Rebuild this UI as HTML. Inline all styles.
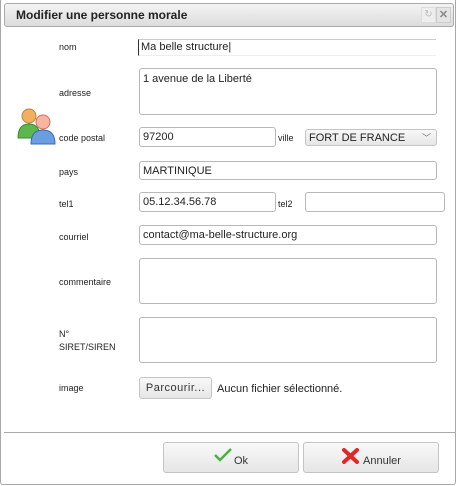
<!DOCTYPE html><html><head><style>
body{margin:0;width:456px;height:486px;background:#fff;font-family:"Liberation Sans",sans-serif;position:relative;overflow:hidden}
.a{position:absolute}
.win{left:0;top:0;width:454px;height:484px;border:1px solid #a8a8a8;border-top:none;border-radius:0 0 3px 3px}
.tb{left:4px;top:3px;width:448px;height:22px;border:1px solid #aaa;border-radius:3px;background:linear-gradient(#f4f4f4,#dcdcdc);font-weight:bold;font-size:12px;color:#222;line-height:22px;text-indent:11px}
.l{left:59px;font-size:9px;color:#222}
.i{border:1px solid #b8b8b8;border-radius:3px;background:#fff;font-size:11px;color:#222;box-sizing:border-box;padding:0 3px;display:flex;align-items:center}
.t{align-items:flex-start;padding-top:4px}
.btn{border:1px solid #c4c4c4;border-radius:3px;background:linear-gradient(#f8f8f8,#e6e6e6);font-size:11px;color:#333;text-align:center;box-sizing:border-box}
</style></head><body>
<div class="a win"></div>
<div class="a tb">Modifier une personne morale</div>
<div class="a" style="left:421px;top:7px;width:13px;height:14px;border:1px solid #ddd;background:#eee;font-size:10px;color:#bbb;text-align:center;line-height:14px">↻</div>
<div class="a" style="left:436px;top:7px;width:13px;height:14px;border:1px solid #ccc;background:#e4e4e4;font-size:11px;color:#888;text-align:center;line-height:14px;font-weight:bold">✕</div>
<div class="a l" style="top:42px">nom</div>
<div class="a" style="left:138px;top:39px;width:295px;height:15px;border-top:1px solid #ccc;border-bottom:1px solid #eee;border-left:1px solid #333;font-size:11px;color:#222;line-height:15px;padding-left:2px">Ma belle structure|</div>
<div class="a l" style="top:88px">adresse</div>
<div class="a i t" style="left:139px;top:68px;width:298px;height:47px">1 avenue de la Liberté</div>
<svg class="a" style="left:16px;top:106px" width="40" height="40" viewBox="0 0 40 40">
<circle cx="13" cy="10" r="7" fill="#f0b060" stroke="#c08040"/>
<path d="M2 32 Q2 18 13 18 Q24 18 24 32 Z" fill="#5cb84c" stroke="#3a8a30"/>
<circle cx="27" cy="16" r="7" fill="#f5b5a0" stroke="#d07060"/>
<path d="M15 38 Q15 24 27 24 Q39 24 39 38 Z" fill="#6a9ee0" stroke="#3a6ab0"/>
</svg>
<div class="a l" style="top:133px">code postal</div>
<div class="a i" style="left:139px;top:127px;width:137px;height:20px">97200</div>
<div class="a l" style="left:278px;top:133px">ville</div>
<div class="a btn" style="left:305px;top:129px;width:132px;height:17px;text-align:left;padding:1px 3px;font-size:11px;color:#222;line-height:14px">FORT DE FRANCE<span style="position:absolute;right:5px;color:#777;font-size:9px">﹀</span></div>
<div class="a l" style="top:167px">pays</div>
<div class="a i" style="left:139px;top:161px;width:298px;height:19px">MARTINIQUE</div>
<div class="a l" style="top:199px">tel1</div>
<div class="a i" style="left:139px;top:192px;width:137px;height:20px">05.12.34.56.78</div>
<div class="a l" style="left:278px;top:199px">tel2</div>
<div class="a i" style="left:305px;top:192px;width:140px;height:20px"></div>
<div class="a l" style="top:232px">courriel</div>
<div class="a i" style="left:139px;top:225px;width:298px;height:20px">contact@ma-belle-structure.org</div>
<div class="a l" style="top:277px">commentaire</div>
<div class="a i" style="left:139px;top:258px;width:298px;height:46px"></div>
<div class="a l" style="top:328px;line-height:13px">N°<br>SIRET/SIREN</div>
<div class="a i" style="left:139px;top:317px;width:298px;height:46px"></div>
<div class="a l" style="top:383px">image</div>
<div class="a btn" style="left:139px;top:377px;width:73px;height:22px;line-height:20px;letter-spacing:.5px">Parcourir...</div>
<div class="a" style="left:217px;top:383px;font-size:11px;color:#222">Aucun fichier sélectionné.</div>
<div class="a" style="left:4px;top:432px;width:452px;height:1px;background:#aaa"></div>
<div class="a btn" style="left:163px;top:442px;width:136px;height:31px;line-height:36px">
<svg style="position:absolute;left:50px;top:5px" width="18" height="14"><path d="M1 7 L6 12 L17 1" fill="none" stroke="#4bb040" stroke-width="2.5"/></svg><span style="margin-left:20px">Ok</span></div>
<div class="a btn" style="left:303px;top:442px;width:136px;height:31px;line-height:36px">
<svg style="position:absolute;left:38px;top:5px" width="17" height="16"><path d="M2 2 L15 14 M15 2 L2 14" stroke="#e02828" stroke-width="4" stroke-linecap="round"/></svg><span style="margin-left:22px">Annuler</span></div>
</body></html>
